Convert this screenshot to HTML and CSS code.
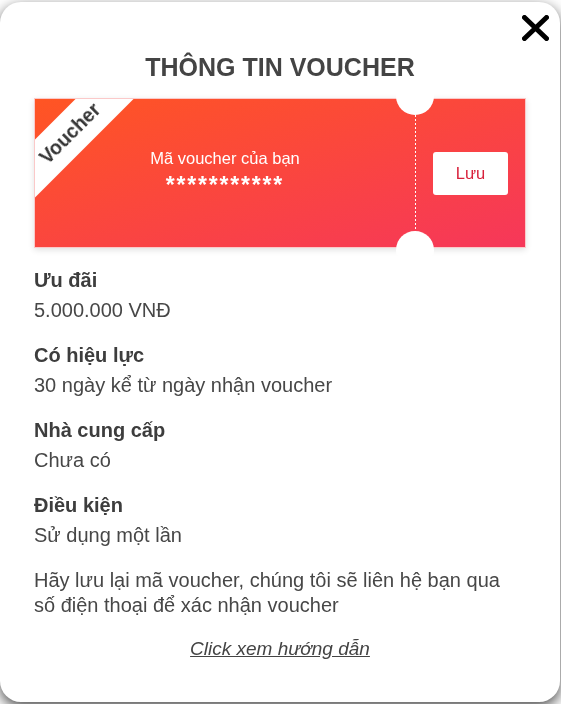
FILE: index.html
```html
<!DOCTYPE html>
<html lang="vi">
<head>
<meta charset="utf-8">
<title>Thông tin voucher</title>
<link rel="stylesheet" href="styles.css">
</head>
<body>
<div class="page">
  <h1 class="page-title">CHƯƠNG TRÌNH KHUYẾN MÃI ĐẶC BIỆT</h1>
</div>
<div class="modal">
  <button class="close" aria-label="Đóng">
    <svg width="27" height="26" viewBox="0 0 27 26"><path d="M2.5 2.5 L24.5 23.5 M24.5 2.5 L2.5 23.5" stroke="#000" stroke-width="5" stroke-linecap="round" fill="none"/></svg>
  </button>
  <h2 class="title">THÔNG TIN VOUCHER</h2>
  <div class="voucher">
    <div class="ribbon-clip"><div class="ribbon">Voucher</div></div>
    <div class="v-main">
      <div class="v-label">Mã voucher của bạn</div>
      <div class="v-code">***********</div>
    </div>
    <div class="v-divider"></div>
    <div class="v-side"><button class="save">Lưu</button></div>
  </div>
  <div class="info">
    <div class="field">
      <div class="label">Ưu đãi</div>
      <div class="value">5.000.000 VNĐ</div>
    </div>
    <div class="field">
      <div class="label">Có hiệu lực</div>
      <div class="value">30 ngày kể từ ngày nhận voucher</div>
    </div>
    <div class="field">
      <div class="label">Nhà cung cấp</div>
      <div class="value">Chưa có</div>
    </div>
    <div class="field">
      <div class="label">Điều kiện</div>
      <div class="value">Sử dụng một lần</div>
    </div>
  </div>
  <p class="note">Hãy lưu lại mã voucher, chúng tôi sẽ liên hệ bạn qua số điện thoại để xác nhận voucher</p>
  <p class="guide"><a href="#">Click xem hướng dẫn</a></p>
</div>
</body>
</html>
```
FILE: styles.css
```css
* { box-sizing: border-box; }
html, body { margin: 0; }
body {
  font-family: "Liberation Sans", Arial, sans-serif;
  background: #fff;
  width: 561px;
  height: 704px;
  overflow: hidden;
}
.page-title {
  margin: -23px 0 0;
  font-size: 28px;
  line-height: 28px;
  font-weight: bold;
  color: #333;
  text-align: center;
}
.modal {
  position: fixed;
  top: 2px;
  left: 0;
  width: 560px;
  height: 700px;
  background: #fff;
  border-radius: 21px;
  box-shadow: 0 5px 14px rgba(0, 0, 0, 0.7);
  padding: 50px 34px 0;
}
.close {
  position: absolute;
  top: 13px;
  right: 11px;
  width: 27px;
  height: 26px;
  padding: 0;
  border: 0;
  background: none;
  cursor: pointer;
}
.close svg { display: block; }
.title {
  margin: 0;
  font-size: 25px;
  line-height: 30px;
  font-weight: bold;
  color: #444;
  text-align: center;
}
.voucher {
  position: relative;
  display: flex;
  margin-top: 16px;
  height: 150px;
  border: 1px solid #fbc9c9;
  background: linear-gradient(to bottom right, #ff5523, #f6375a);
  box-shadow: 0 2px 6px rgba(0, 0, 0, 0.12);
}
.ribbon-clip {
  position: absolute;
  inset: 0;
  overflow: hidden;
}
.ribbon {
  position: absolute;
  left: -55px;
  top: 14px;
  width: 180px;
  height: 41px;
  line-height: 41px;
  background: #fff;
  color: #333;
  font-size: 19.5px;
  font-weight: bold;
  text-align: center;
  transform: rotate(-45deg);
}
.v-main {
  width: 380px;
  display: flex;
  flex-direction: column;
  align-items: center;
  justify-content: center;
  color: #fff;
}
.v-label { font-size: 16.5px; line-height: 20px; }
.v-code {
  margin-top: 4px;
  font-size: 23px;
  line-height: 27px;
  font-weight: bold;
  letter-spacing: 1.8px;
}
.v-divider {
  position: relative;
  width: 1px;
  background: repeating-linear-gradient(to bottom, #fff 0 2px, transparent 2px 4px);
}
.v-divider::before,
.v-divider::after {
  content: "";
  position: absolute;
  left: -19px;
  width: 38px;
  height: 38px;
  border-radius: 50%;
  background: #fff;
}
.v-divider::before { top: -22px; }
.v-divider::after { bottom: -22px; }
.v-side {
  flex: 1;
  display: flex;
  align-items: center;
  justify-content: center;
}
.save {
  width: 75px;
  height: 43px;
  padding: 0;
  border: 0;
  border-radius: 3px;
  background: #fff;
  color: #d8213b;
  font: 16.5px "Liberation Sans", Arial, sans-serif;
}
.info { margin-top: 17px; }
.field + .field { margin-top: 15px; }
.label {
  font-size: 20px;
  line-height: 30px;
  font-weight: bold;
  color: #3d3d3d;
}
.value {
  font-size: 20px;
  line-height: 30px;
  color: #474747;
}
.note {
  margin: 18px 0 0;
  font-size: 20px;
  line-height: 25px;
  color: #474747;
}
.guide {
  margin: 18px 0 0;
  text-align: center;
  font-size: 19px;
  line-height: 26px;
  font-style: italic;
}
.guide a {
  color: #444;
  text-decoration: underline;
}
```
